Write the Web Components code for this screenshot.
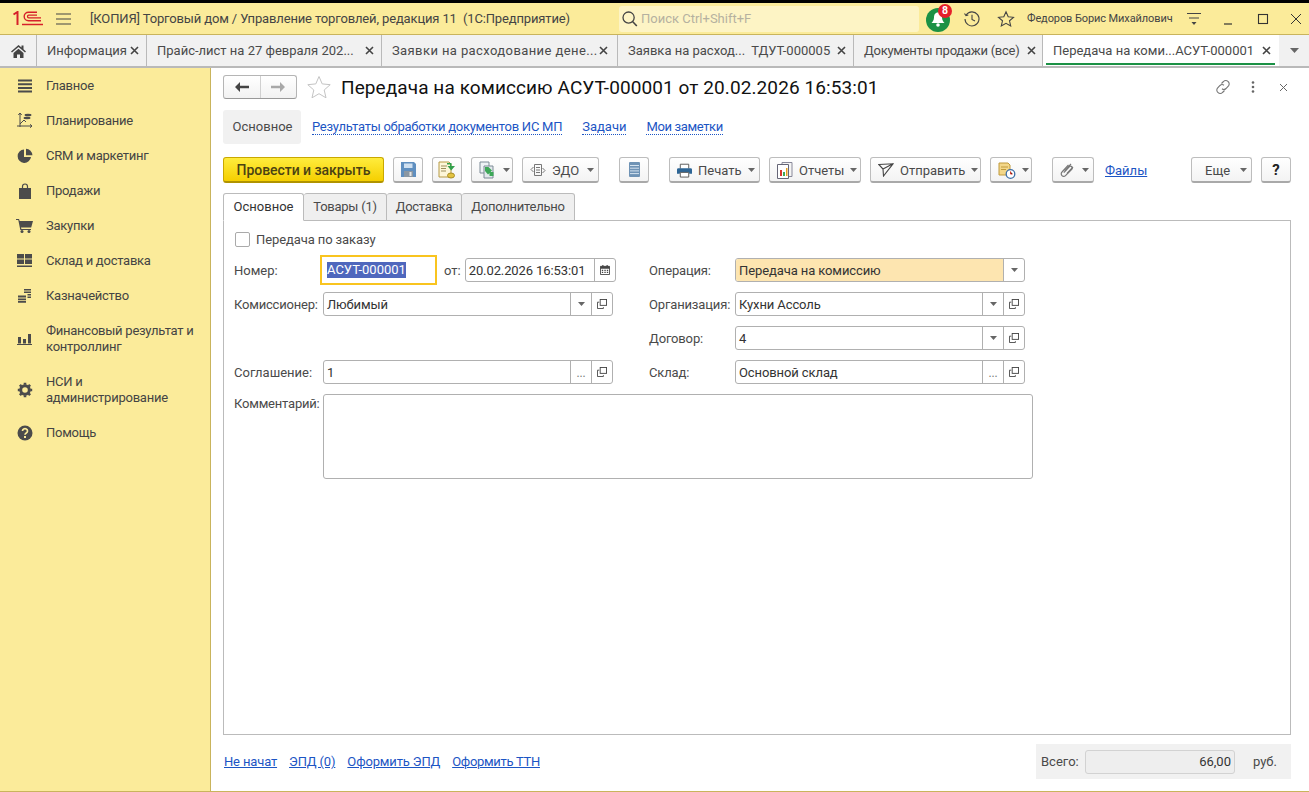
<!DOCTYPE html>
<html lang="ru">
<head>
<meta charset="utf-8">
<title>Передача на комиссию</title>
<style>
  html, body { margin: 0; padding: 0; height: 100%; overflow: hidden; background: #fff; }
  body { font: 13px Roboto, "Liberation Sans", sans-serif; color: #333; }
</style>
</head>
<body>
<app-shell></app-shell>
<script>
const ICONS = {
  logo: '<svg width="30" height="15" viewBox="0 0 30 15"><g fill="none" stroke="#d6202a"><path d="M.5 3.500 4.500 1V14" stroke-width="2"/><path d="M28 9.800H15.500a4.300 4.300 0 0 1 0-8.600H24" stroke-width="1.400"/><path d="M28 6.800H15.800a1.300 1.300 0 0 1 0-2.600H24" stroke-width="1.300"/><path d="M9 13.500H30" stroke-width="1.500"/></g></svg>',
  burger: '<svg width="15" height="12" viewBox="0 0 15 12"><path d="M0 1h15M0 6h15M0 11h15" stroke="#444" stroke-width="1.200"/></svg>',
  search: '<svg width="18" height="18" viewBox="0 0 18 18"><circle cx="7.600" cy="7.600" r="5.600" fill="none" stroke="#444" stroke-width="1.300"/><path d="m11.800 11.800 4 4.200" stroke="#444" stroke-width="1.600"/></svg>',
  bell: '<svg width="26" height="26" viewBox="0 0 26 26"><circle cx="12" cy="14" r="12" fill="#1b9145"/><path d="M12 6.500c-3 0-4 2.500-4 5 0 3-1.800 4.500-2.500 5.500h13c-.7-1-2.500-2.500-2.500-5.500 0-2.500-1-5-4-5z" fill="#fff"/><circle cx="12" cy="19" r="1.800" fill="#fff"/></svg>',
  history: '<svg width="18" height="18" viewBox="0 0 18 18" fill="none" stroke="#444" stroke-width="1.100"><path d="M3.200 5A7 7 0 1 1 2 9"/><path d="M1.500 3.500 3 5.600l2.300-.6"/><path d="M9 4.800V9.500l3 1.500"/></svg>',
  star: '<svg width="18" height="18" viewBox="0 0 18 18"><path d="m9 1.800 2.200 4.900 5.300.6-4 3.500 1.200 5.200L9 13.300l-4.700 2.700 1.200-5.200-4-3.500 5.300-.6z" fill="none" stroke="#444" stroke-width="1.100"/></svg>',
  starBig: '<svg width="26" height="24" viewBox="0 0 26 24"><path d="m13 1.500 3.200 7.400 8 .8-6 5.300 1.800 7.800-7-4.100-7 4.100 1.800-7.800-6-5.300 8-.8z" fill="none" stroke="#c4c4c4" stroke-width="1"/></svg>',
  userMenu: '<svg width="16" height="16" viewBox="0 0 16 16"><path d="M1 2.500h14M3 7h10" stroke="#444" stroke-width="1.200"/><path d="M5.500 11h5L8 14z" fill="#444"/></svg>',
  minimize: '<svg width="12" height="12" viewBox="0 0 12 12"><path d="M2 11h8" stroke="#333" stroke-width="1.200"/></svg>',
  maximize: '<svg width="12" height="12" viewBox="0 0 12 12"><rect x="1.500" y="1.500" width="9" height="9" fill="none" stroke="#333" stroke-width="1.100"/></svg>',
  closeWin: '<svg width="12" height="12" viewBox="0 0 12 12"><path d="m1 1 10 10M11 1 1 11" stroke="#333" stroke-width="1"/></svg>',
  home: '<svg width="15" height="14" viewBox="0 0 15 14"><path d="M7.500 1 0 7.500l1 1L7.500 3l6.500 5.500 1-1L12.500 5.300V1.500h-2v2zM2.500 9v5h3.500v-3.500h3V14h3.500V9l-5-4.200z" fill="#444"/></svg>',
  tabX: '<svg width="9" height="9" viewBox="0 0 9 9"><path d="m1 1 7 7M8 1 1 8" stroke="#444" stroke-width="1.600"/></svg>',
  down: '<svg width="7" height="4" viewBox="0 0 7 4"><path d="M0 0h7L3.500 4z" fill="#666"/></svg>',
  tabDown: '<svg width="9" height="5" viewBox="0 0 9 5"><path d="M0 0h9L4.500 5z" fill="#666"/></svg>',
  navMain: '<svg width="16" height="16" viewBox="0 0 16 16"><path d="M1 2.500h14M1 6.200h14M1 9.900h14M1 13.600h14" stroke="#4b4b4b" stroke-width="2"/></svg>',
  navPlan: '<svg width="16" height="18" viewBox="0 0 16 18" fill="none" stroke="#4b4b4b"><path d="M3 1v14M0 14h15M1.300 3 3 1l1.700 2M13 12.300l2 1.700-2 1.700"/><path d="m3 12 4-4 2 2"/><ellipse cx="11" cy="3" rx="3.500" ry="1.300" fill="#4b4b4b" stroke="none"/><ellipse cx="10" cy="6" rx="3.500" ry="1.200" fill="#4b4b4b" stroke="none"/></svg>',
  navCrm: '<svg width="16" height="16" viewBox="0 0 16 16"><path d="M7 1.500a6.700 6.700 0 1 0 7 7.500H7z" fill="#4b4b4b"/><path d="M9 .8v6.400h6.400A6.600 6.600 0 0 0 9 .8z" fill="#4b4b4b"/></svg>',
  navSales: '<svg width="14" height="16" viewBox="0 0 14 16"><path d="M1 5h12v11H1z" fill="#4b4b4b"/><path d="M4.500 6V3.500a2.500 2.500 0 0 1 5 0V6" fill="none" stroke="#4b4b4b" stroke-width="1.200"/></svg>',
  navBuy: '<svg width="17" height="15" viewBox="0 0 17 15"><path d="M0 1h3l.7 2H17l-1.800 6.500H5l.4 1.500h9.600v1H4.300L2.300 2H0z" fill="#4b4b4b"/><circle cx="6" cy="13.500" r="1.500" fill="#4b4b4b"/><circle cx="13" cy="13.500" r="1.500" fill="#4b4b4b"/></svg>',
  navStock: '<svg width="15" height="13" viewBox="0 0 15 13"><path d="M0 0h7v4.500H0zM8 0h7v4.500H8zM0 5.500h7V10H0zM8 5.500h7V10H8zM0 11.500h15V13H0z" fill="#4b4b4b"/></svg>',
  navMoney: '<svg width="14" height="15" viewBox="0 0 14 15"><path d="M0 7.500h8v2H0zM0 10.500h8v1.800H0zM0 13h8v1.800H0z" fill="#4b4b4b"/><path d="M6 1h7v1.500H6zM6 3.500h7V5H6zM9.500 6H13v1.500H9.500zM9.500 8.500H13V10H9.500z" fill="#4b4b4b"/></svg>',
  navChart: '<svg width="15" height="12" viewBox="0 0 15 12"><path d="M1 4h3v6.500H1zM6 6h3v4.500H6zM11 1h3v9.500h-3zM0 11h15v1H0z" fill="#4b4b4b"/></svg>',
  navGear: '<svg width="16" height="16" viewBox="0 0 16 16"><circle cx="8" cy="8" r="4.300" fill="none" stroke="#4b4b4b" stroke-width="3"/><path d="M8 8V.8M8 8v7.200M8 8H.8M8 8h7.200M8 8 2.900 2.900M8 8l5.100 5.100M8 8l5.100-5.100M8 8l-5.100 5.100" stroke="#4b4b4b" stroke-width="2.600" stroke-dasharray="0 5.200 2.200 9"/></svg>',
  navHelp: '<svg width="16" height="16" viewBox="0 0 16 16"><circle cx="8" cy="8" r="7.500" fill="#4b4b4b"/><path d="M5.500 6a2.500 2.300 0 1 1 3.800 2c-.8.500-1.300.9-1.300 1.800" fill="none" stroke="#fbeb9a" stroke-width="1.700"/><rect x="7" y="11" width="2" height="2" fill="#fbeb9a"/></svg>',
  back: '<svg width="14" height="10" viewBox="0 0 14 10"><path d="M5 0 0 5l5 5V6.200h9V3.800H5z" fill="#444"/></svg>',
  forward: '<svg width="14" height="10" viewBox="0 0 14 10"><path d="m9 0 5 5-5 5V6.200H0V3.800h9z" fill="#a8a8a8"/></svg>',
  link: '<svg width="16" height="16" viewBox="0 0 16 16" fill="none" stroke="#777" stroke-width="1.100"><path d="m6.500 4.500 2-2a3 3 0 0 1 4.500 0 3 3 0 0 1 .5 4.300L11 9.500a3 3 0 0 1-4 .2"/><path d="m9.500 11.500-2 2a3 3 0 0 1-4.500 0 3 3 0 0 1-.5-4.300L5 6.500a3 3 0 0 1 4-.2"/></svg>',
  dots: '<svg width="4" height="12" viewBox="0 0 4 12"><circle cx="2" cy="1.500" r="1.300" fill="#666"/><circle cx="2" cy="6" r="1.300" fill="#666"/><circle cx="2" cy="10.500" r="1.300" fill="#666"/></svg>',
  closeDoc: '<svg width="9" height="9" viewBox="0 0 9 9"><path d="m1 1 7 7M8 1 1 8" stroke="#666" stroke-width="1"/></svg>',
  save: '<svg width="15" height="15" viewBox="0 0 15 15"><path d="M0 0h13l2 2v13H0z" fill="#5f8fc0"/><rect x="3" y="1.500" width="8.500" height="4.500" fill="#cfe0f0"/><rect x="3" y="9" width="9" height="6" fill="#8a97a3"/><rect x="8.500" y="10" width="2" height="4" fill="#e6e6e6"/></svg>',
  postGreen: '<svg width="18" height="18" viewBox="0 0 18 18"><path d="M1 1h10l2 2v13H1z" fill="#fdf6d8" stroke="#b79a44"/><path d="M3 5h6M3 7.500h5M3 10h5" stroke="#9c8d5c"/><ellipse cx="13" cy="14.500" rx="3.500" ry="2.500" fill="#e3c341" stroke="#a88d25"/><path d="M9 2h4.500v3H17l-3.800 4.500L9.500 5H12V3.500H9z" fill="#32a04c"/></svg>',
  copyGreen: '<svg width="18" height="18" viewBox="0 0 18 18"><path d="M1 1h9v11H1z" fill="#eef2f5" stroke="#7c8b96"/><path d="M5 5h9v12H5z" fill="#e2e8ec" stroke="#7c8b96"/><path d="M6 6h3.500l3.500 3.500-1.500 1.500 3 0v4h-4v-3L9 13.500 6 10z" fill="#3da858"/></svg>',
  edo: '<svg width="16" height="14" viewBox="0 0 16 14" fill="none" stroke="#777"><path d="M4.500 1.500h7v11h-7zM6 4.500h4M6 7h4M6 9.500h4"/><path d="M3.500 4 1 6.500 3.500 9M12.500 5 15 7.500 12.500 10"/></svg>',
  list: '<svg width="11" height="15" viewBox="0 0 11 15"><rect width="11" height="15" rx="1" fill="#6f93b5"/><path d="M1 3.500h9M1 6.200h9M1 8.900h9M1 11.600h9" stroke="#d5e3ef" stroke-width="1"/></svg>',
  print: '<svg width="15" height="15" viewBox="0 0 16 15"><path d="M3.500 5.500V.8h9v4.700" fill="#fff" stroke="#555"/><path d="M1.500 5h13A1.500 1.500 0 0 1 16 6.500V11h-3v-1H3v1H0V6.500A1.500 1.500 0 0 1 1.500 5z" fill="#2d6595"/><path d="M3.500 9.500h9v5h-9z" fill="#fff" stroke="#555"/></svg>',
  reports: '<svg width="16" height="17" viewBox="0 0 16 17"><path d="M5 .5h10v14H5z" fill="#f5f5f5" stroke="#889"/><path d="M.5 2.500h11v14H.5z" fill="#fff" stroke="#667"/><path d="M3 8h2v6H3z" fill="#d9352b"/><path d="M6 10h2v4H6z" fill="#3da858"/><path d="M9 6h1.500v8H9z" fill="#e8a020"/></svg>',
  send: '<svg width="16" height="14" viewBox="0 0 16 14" fill="none" stroke="#444" stroke-width="1.100"><path d="M.8 1.500 15 .8 5.500 13l-.5-7zM5 6l10-5.200"/></svg>',
  sched: '<svg width="18" height="17" viewBox="0 0 18 17"><path d="M1 1h9l2 2v10H1z" fill="#f3d789" stroke="#c09a3c"/><path d="M3 5h7M3 7.500h5" stroke="#c09a3c"/><circle cx="12.500" cy="12" r="4.300" fill="#fff" stroke="#3d6fa8" stroke-width="1.300"/><path d="M12.500 9.500V12h2" stroke="#d9352b"/></svg>',
  clip: '<svg width="14" height="15" viewBox="0 0 14 15" fill="none" stroke="#777" stroke-width="1.200"><path d="M8.500 2 2 9a2.500 2.500 0 0 0 3.500 3.600L12 6a1.800 1.800 0 0 0-2.500-2.500L3.800 9.600"/><path d="M11 1 4.800 7.800M13 4 7 10.500"/></svg>',
  open: '<svg width="10" height="10" viewBox="0 0 11 11" fill="none" stroke="#444"><rect x="3.500" y=".5" width="7" height="6.500"/><path d="M2.500 3.500H.5v7h6.500V9"/></svg>',
  cal: '<svg width="10" height="10" viewBox="0 0 11 11"><path d="M.5 1.500h10v9H.5z" fill="none" stroke="#444"/><path d="M.5 1.500h10V4H.5zM2.500 0h1.300v2H2.500zM7.200 0h1.300v2H7.200z" fill="#444"/><path d="M2 5.200h1.500v1.300H2zM4.800 5.200h1.500v1.300H4.800zM7.500 5.200H9v1.300H7.500zM2 7.500h1.500v1.300H2zM4.800 7.500h1.500v1.300H4.800zM7.500 7.500H9v1.300H7.500z" fill="#444"/></svg>'
};

class BaseEl extends HTMLElement {
  constructor() {
    super();
    this.attachShadow({ mode: 'open' });
  }
  connectedCallback() {
    this.shadowRoot.innerHTML = `<style>${this.getStyles()}</style>${this.getTemplate()}`;
  }
  attr(name, def = '') {
    return this.hasAttribute(name) ? this.getAttribute(name) : def;
  }
}

class XIcon extends BaseEl {
  getStyles() { return ':host{display:inline-flex;align-items:center;justify-content:center;line-height:0;flex:none}'; }
  getTemplate() { return ICONS[this.attr('name')] || ''; }
}

class AppShell extends BaseEl {
  getStyles() {
    return `
      :host{display:flex;flex-direction:column;width:1309px;height:792px;overflow:hidden;background:#fff}
      .top{height:3px;background:#000;flex:none}
      .body{flex:1;display:flex;min-height:0;border-bottom:1px solid #c9b45c}
    `;
  }
  getTemplate() {
    return `
      <div class="top"></div>
      <title-bar></title-bar>
      <tab-strip></tab-strip>
      <div class="body">
        <side-nav></side-nav>
        <doc-view></doc-view>
      </div>`;
  }
}

class TitleBar extends BaseEl {
  getStyles() {
    return `
      :host{display:flex;align-items:center;flex:none;height:31px;background:#fbeb9a;border-bottom:1px solid #c9b45c;font:13px Roboto,sans-serif;color:#4a4a4a;white-space:pre}
      .logo{margin:0 13px 0 13px}
      .title{margin-left:19px;width:529px;color:#444;letter-spacing:-.14px}
      .search{display:flex;align-items:center;gap:2px;box-sizing:border-box;width:300px;height:26px;padding-left:2px;background:#fdf4c5;border-radius:3px;color:#b5b1a0;font-size:13px}
      .bell{position:relative;margin-left:7px;width:26px;height:26px}
      .badge{position:absolute;left:12px;top:-2px;width:14px;height:14px;border-radius:50%;background:#e5202b;color:#fff;font:bold 10.500px/14px Roboto,sans-serif;text-align:center}
      .hist{margin-left:11px}
      .fav{margin-left:16px}
      .user{margin-left:12px;font-size:11px;letter-spacing:-.1px;color:#444;width:145px}
      .menu{margin-left:14px}
      .min{margin-left:20px}
      .max{margin-left:23px}
      .x{margin-left:21px}
    `;
  }
  getTemplate() {
    return `
      <x-icon class="logo" name="logo"></x-icon>
      <x-icon name="burger"></x-icon>
      <span class="title">[КОПИЯ] Торговый дом / Управление торговлей, редакция 11  (1С:Предприятие)</span>
      <div class="search"><x-icon name="search"></x-icon><span>Поиск Ctrl+Shift+F</span></div>
      <div class="bell"><x-icon name="bell"></x-icon><span class="badge">8</span></div>
      <x-icon class="hist" name="history"></x-icon>
      <x-icon class="fav" name="star"></x-icon>
      <span class="user">Федоров Борис Михайлович</span>
      <x-icon class="menu" name="userMenu"></x-icon>
      <x-icon class="min" name="minimize"></x-icon>
      <x-icon class="max" name="maximize"></x-icon>
      <x-icon class="x" name="closeWin"></x-icon>`;
  }
}

class TabStrip extends BaseEl {
  getStyles() {
    return `
      :host{display:flex;flex:none;height:31px;background:#f1f1f1;border-bottom:2px solid #b9b9b9;box-sizing:content-box}
      .home{width:36px;display:flex;align-items:center;justify-content:center;border-right:1px solid #b9b9b9;flex:none}
      .more{flex:1;display:flex;align-items:center;justify-content:center}
    `;
  }
  getTemplate() {
    return `
      <div class="home"><x-icon name="home"></x-icon></div>
      <doc-tab w="110" text-w="76">Информация</doc-tab>
      <doc-tab w="235" text-w="201">Прайс-лист на 27 февраля 202...</doc-tab>
      <doc-tab w="236" text-w="200" ls=".4">Заявки на расходование дене...</doc-tab>
      <doc-tab w="236" text-w="202">Заявка на расход...  ТДУТ-000005</doc-tab>
      <doc-tab w="189" text-w="156" ls="-.26">Документы продажи (все)</doc-tab>
      <doc-tab w="236" text-w="202" active>Передача на коми...АСУТ-000001</doc-tab>
      <div class="more"><x-icon name="tabDown"></x-icon></div>`;
  }
}

class DocTab extends BaseEl {
  getStyles() {
    const w = this.attr('w', '100');
    const tw = this.attr('text-w', '80');
    const on = this.hasAttribute('active');
    return `
      :host{display:flex;align-items:center;position:relative;box-sizing:border-box;width:${w}px;flex:none;padding-left:10px;border-right:1px solid ${on ? 'transparent' : '#b9b9b9'};background:${on ? '#fff' : 'transparent'};font:13px Roboto,sans-serif;letter-spacing:${this.attr('ls', '0')}px;color:#4a4a4a;white-space:pre}
      .t{width:${tw}px;flex:none}
      x-icon{margin-left:7px}
      .line{position:absolute;left:3px;right:3px;bottom:1px;height:2px;background:#1b9145}
    `;
  }
  getTemplate() {
    return `<span class="t"><slot></slot></span><x-icon name="tabX"></x-icon>${this.hasAttribute('active') ? '<div class="line"></div>' : ''}`;
  }
}

class SideNav extends BaseEl {
  getStyles() {
    return ':host{display:block;box-sizing:content-box;width:210px;flex:none;background:#fbeb9a;border-right:1px solid #c9b45c}';
  }
  getTemplate() {
    return `
      <nav-item icon="navMain">Главное</nav-item>
      <nav-item icon="navPlan">Планирование</nav-item>
      <nav-item icon="navCrm">CRM и маркетинг</nav-item>
      <nav-item icon="navSales">Продажи</nav-item>
      <nav-item icon="navBuy">Закупки</nav-item>
      <nav-item icon="navStock">Склад и доставка</nav-item>
      <nav-item icon="navMoney">Казначейство</nav-item>
      <nav-item icon="navChart">Финансовый результат и контроллинг</nav-item>
      <nav-item icon="navGear">НСИ и<br>администрирование</nav-item>
      <nav-item icon="navHelp">Помощь</nav-item>`;
  }
}

class NavItem extends BaseEl {
  getStyles() {
    return `
      :host{display:flex;align-items:center;box-sizing:border-box;padding:9.500px 10px 9.500px 16px;font:13px/16px Roboto,sans-serif;letter-spacing:-.25px;color:#444}
      .i{width:17px;height:16px;display:flex;align-items:center;justify-content:center;margin-right:13px;flex:none}
    `;
  }
  getTemplate() {
    return `<div class="i"><x-icon name="${this.attr('icon')}"></x-icon></div><div><slot></slot></div>`;
  }
}

class DocView extends BaseEl {
  getStyles() {
    return `
      :host{flex:1;display:flex;flex-direction:column;min-width:0;padding:0 18px 0 12px;font:13px Roboto,sans-serif;color:#4a4a4a}
    `;
  }
  getTemplate() {
    return `
      <doc-header></doc-header>
      <sub-nav></sub-nav>
      <doc-toolbar></doc-toolbar>
      <form-tabs></form-tabs>
      <form-panel></form-panel>
      <doc-footer></doc-footer>`;
  }
}

class DocHeader extends BaseEl {
  getStyles() {
    return `
      :host{display:flex;align-items:center;flex:none;box-sizing:border-box;height:42px;padding-bottom:4px}
      .nav{display:flex;width:74px;height:24px;box-sizing:border-box;border:1px solid #b5b5b5;border-bottom-color:#999;border-radius:3px;background:linear-gradient(#fff,#f2f2f2)}
      .nav div{flex:1;display:flex;align-items:center;justify-content:center}
      .nav div+div{border-left:1px solid #d0d0d0}
      .star{margin-left:9px}
      h1{margin:0 0 0 9px;flex:1;font:400 19px Roboto,sans-serif;letter-spacing:.09px;color:#111;white-space:nowrap}
      .acts{display:flex;align-items:center}
      .link{margin-right:20px}
      .dots{margin-right:24px}
      .cl{margin-right:3px}
    `;
  }
  getTemplate() {
    return `
      <div class="nav"><div><x-icon name="back"></x-icon></div><div><x-icon name="forward"></x-icon></div></div>
      <x-icon class="star" name="starBig"></x-icon>
      <h1>Передача на комиссию АСУТ-000001 от 20.02.2026 16:53:01</h1>
      <div class="acts">
        <x-icon class="link" name="link"></x-icon>
        <x-icon class="dots" name="dots"></x-icon>
        <x-icon class="cl" name="closeDoc"></x-icon>
      </div>`;
  }
}

class SubNav extends BaseEl {
  getStyles() {
    return `
      :host{display:flex;align-items:center;flex:none;height:34px;font:13px Roboto,sans-serif}
      .cur{box-sizing:border-box;width:78px;height:34px;line-height:34px;padding-left:1px;text-align:center;background:#f1f1f1;border-radius:3px;color:#4a4a4a}
      a{color:#1c55c4;text-decoration:none;border-bottom:1px dotted #1c55c4;line-height:14px}
      .a1{margin-left:11px;letter-spacing:-.26px}
      .a2{margin-left:20px}
      .a3{margin-left:20px;letter-spacing:-.36px}
    `;
  }
  getTemplate() {
    return `
      <div class="cur">Основное</div>
      <a class="a1">Результаты обработки документов ИС МП</a>
      <a class="a2">Задачи</a>
      <a class="a3">Мои заметки</a>`;
  }
}

class DocToolbar extends BaseEl {
  getStyles() {
    return `
      :host{display:flex;align-items:center;flex:none;height:26px;margin-top:13px;gap:9px}
      .sep{margin-left:11px}
      a{color:#1c55c4;text-decoration:underline;margin-left:2px;font:13px Roboto,sans-serif}
      .push{flex:1}
    `;
  }
  getTemplate() {
    return `
      <tool-btn primary w="161">Провести и закрыть</tool-btn>
      <tool-btn w="30" icon="save"></tool-btn>
      <tool-btn w="30" icon="postGreen"></tool-btn>
      <tool-btn w="42" icon="copyGreen" drop></tool-btn>
      <tool-btn w="77" icon="edo" drop>ЭДО</tool-btn>
      <tool-btn class="sep" w="30" icon="list"></tool-btn>
      <tool-btn class="sep" w="91" icon="print" drop>Печать</tool-btn>
      <tool-btn w="92" icon="reports" drop>Отчеты</tool-btn>
      <tool-btn w="111" icon="send" drop>Отправить</tool-btn>
      <tool-btn w="42" icon="sched" drop></tool-btn>
      <tool-btn class="sep" w="42" icon="clip" drop></tool-btn>
      <a>Файлы</a>
      <div class="push"></div>
      <tool-btn w="61" drop>Еще</tool-btn>
      <tool-btn w="30"><b>?</b></tool-btn>`;
  }
}

class ToolBtn extends BaseEl {
  getStyles() {
    const primary = this.hasAttribute('primary');
    const drop = this.hasAttribute('drop');
    const icon = this.hasAttribute('icon');
    const pad = drop ? `justify-content:flex-start;padding:1px 4px 0 ${icon ? 7 : 13}px;` : 'justify-content:center;';
    return `
      :host{display:flex;align-items:center;${pad}gap:6px;box-sizing:border-box;flex:none;width:${this.attr('w', '30')}px;height:26px;border:1px solid ${primary ? '#c9a800' : '#bdbdbd'};border-bottom:2px solid ${primary ? '#b09300' : '#a9a9a9'};border-radius:3px;background:${primary ? 'linear-gradient(#ffec3d,#f5cf00)' : 'linear-gradient(#fff,#f3f3f3)'};font:${primary ? '500 14px' : '13px'} Roboto,sans-serif;color:${primary ? '#4a4212' : '#4a4a4a'};letter-spacing:${primary ? '-.05px' : '0'};white-space:nowrap}
      ::slotted(b){font:700 15px Roboto,sans-serif;color:#222}
      .arr{margin-left:auto}
    `;
  }
  getTemplate() {
    const icon = this.attr('icon');
    return `${icon ? `<x-icon name="${icon}"></x-icon>` : ''}<slot></slot>${this.hasAttribute('drop') ? '<x-icon class="arr" name="down"></x-icon>' : ''}`;
  }
}

class FormTabs extends BaseEl {
  getStyles() {
    return `
      :host{display:flex;flex:none;height:28px;margin-top:10px;font:13px Roboto,sans-serif;letter-spacing:-.25px;color:#4a4a4a;position:relative;z-index:1;margin-bottom:-1px}
      div{box-sizing:border-box;display:flex;align-items:center;justify-content:center;height:28px;padding-bottom:2px;background:#efefef;border:1px solid #bbb;border-left:0;border-radius:3px 3px 0 0}
      .on{background:#fff;border-left:1px solid #bbb;border-bottom-color:#fff;color:#333;letter-spacing:0}
    `;
  }
  getTemplate() {
    return `
      <div class="on" style="width:81px">Основное</div>
      <div style="width:83px">Товары (1)</div>
      <div style="width:75px">Доставка</div>
      <div style="width:113px">Дополнительно</div>`;
  }
}

class FormPanel extends BaseEl {
  getStyles() {
    return `
      :host{display:block;flex:none;box-sizing:border-box;height:515px;border:1px solid #bbb;padding:10px 0 0 10px;font:13px Roboto,sans-serif;color:#4a4a4a}
      .check{display:flex;align-items:center;height:16px;gap:6px;margin:0 0 11px 1px;letter-spacing:-.1px}
      .box{box-sizing:border-box;width:15px;height:15px;border:1px solid #aaa;border-radius:2px;background:#fff}
      .grid{display:grid;grid-template-columns:89px 290px 122px 290px;row-gap:10px;grid-auto-rows:24px;align-items:center}
      .tight{letter-spacing:-.2px}
      .r{margin-left:36px;letter-spacing:-.15px}
      .num{display:flex;align-items:center}
      .focus{box-sizing:border-box;flex:none;width:117px;height:30px;margin:-3px 0 -3px -3px;border:2px solid #f9c41f;padding:0 0 0 5px;display:flex;align-items:center;color:#fff}
      .focus span{background:#4f67bd;line-height:16px}
      .of{margin-left:7px;margin-right:4px;flex:none}
      .date{width:151px;flex:none}
      .last{display:grid;grid-template-columns:89px 710px;margin-top:10px}
      .clabel{padding-top:2px}
      .comment{box-sizing:border-box;width:710px;height:85px;border:1px solid #b0b0b0;border-radius:3px}
    `;
  }
  getTemplate() {
    return `
      <div class="check"><span class="box"></span><span>Передача по заказу</span></div>
      <div class="grid">
        <span>Номер:</span>
        <div class="num">
          <div class="focus"><span>АСУТ-000001</span></div>
          <span class="of">от:</span>
          <input-box class="date" btn1="cal">20.02.2026 16:53:01</input-box>
        </div>
        <span class="r">Операция:</span>
        <input-box fill btn1="down">Передача на комиссию</input-box>

        <span class="tight">Комиссионер:</span>
        <input-box btn1="down" btn2="open">Любимый</input-box>
        <span class="r">Организация:</span>
        <input-box btn1="down" btn2="open">Кухни Ассоль</input-box>

        <span></span><span></span>
        <span class="r">Договор:</span>
        <input-box btn1="down" btn2="open">4</input-box>

        <span>Соглашение:</span>
        <input-box btn1="dots" btn2="open">1</input-box>
        <span class="r">Склад:</span>
        <input-box btn1="dots" btn2="open">Основной склад</input-box>
      </div>
      <div class="last">
        <span class="clabel tight">Комментарий:</span>
        <div class="comment"></div>
      </div>`;
  }
}

class InputBox extends BaseEl {
  getStyles() {
    return `
      :host{display:flex;box-sizing:border-box;height:24px;border:1px solid #b0b0b0;border-radius:3px;overflow:hidden;background:#fff;color:#333;font:13px Roboto,sans-serif;letter-spacing:-.1px;white-space:nowrap}
      .v{flex:1;display:flex;align-items:center;padding-left:3px;min-width:0;${this.hasAttribute('fill') ? 'background:#fde5b0;' : ''}}
      .b{width:21px;flex:none;display:flex;align-items:center;justify-content:center;border-left:1px solid #b0b0b0;box-sizing:border-box;color:#777}
      .d{font-size:12px;padding-top:2px}
    `;
  }
  btn(name) {
    if (!name) return '';
    if (name === 'dots') return '<div class="b d">...</div>';
    return `<div class="b"><x-icon name="${name}"></x-icon></div>`;
  }
  getTemplate() {
    return `<div class="v"><slot></slot></div>${this.btn(this.attr('btn1'))}${this.btn(this.attr('btn2'))}`;
  }
}

class DocFooter extends BaseEl {
  getStyles() {
    return `
      :host{flex:1;display:flex;align-items:flex-start;justify-content:space-between;padding-top:9px;font:13px Roboto,sans-serif;color:#4a4a4a}
      .links{display:flex;gap:12px;height:35px;align-items:center;padding-left:1px;letter-spacing:-.15px}
      a{color:#1c55c4;text-decoration:underline}
      .ttn{letter-spacing:-.3px}
      .total{box-sizing:border-box;width:255px;height:35px;background:#f1f1f1;display:flex;align-items:center;padding:0 14px 0 5px}
      .sum{box-sizing:border-box;width:151px;height:24px;margin-left:6px;border:1px solid #d2d2d2;border-radius:3px;background:#eee;display:flex;align-items:center;justify-content:flex-end;padding-right:3px;color:#333}
      .rub{margin-left:18px}
    `;
  }
  getTemplate() {
    return `
      <div class="links"><a>Не начат</a><a>ЭПД (0)</a><a>Оформить ЭПД</a><a class="ttn">Оформить ТТН</a></div>
      <div class="total"><span>Всего:</span><div class="sum">66,00</div><span class="rub">руб.</span></div>`;
  }
}

customElements.define('x-icon', XIcon);
customElements.define('app-shell', AppShell);
customElements.define('title-bar', TitleBar);
customElements.define('tab-strip', TabStrip);
customElements.define('doc-tab', DocTab);
customElements.define('side-nav', SideNav);
customElements.define('nav-item', NavItem);
customElements.define('doc-view', DocView);
customElements.define('doc-header', DocHeader);
customElements.define('sub-nav', SubNav);
customElements.define('doc-toolbar', DocToolbar);
customElements.define('tool-btn', ToolBtn);
customElements.define('form-tabs', FormTabs);
customElements.define('form-panel', FormPanel);
customElements.define('input-box', InputBox);
customElements.define('doc-footer', DocFooter);
</script>
</body>
</html>
